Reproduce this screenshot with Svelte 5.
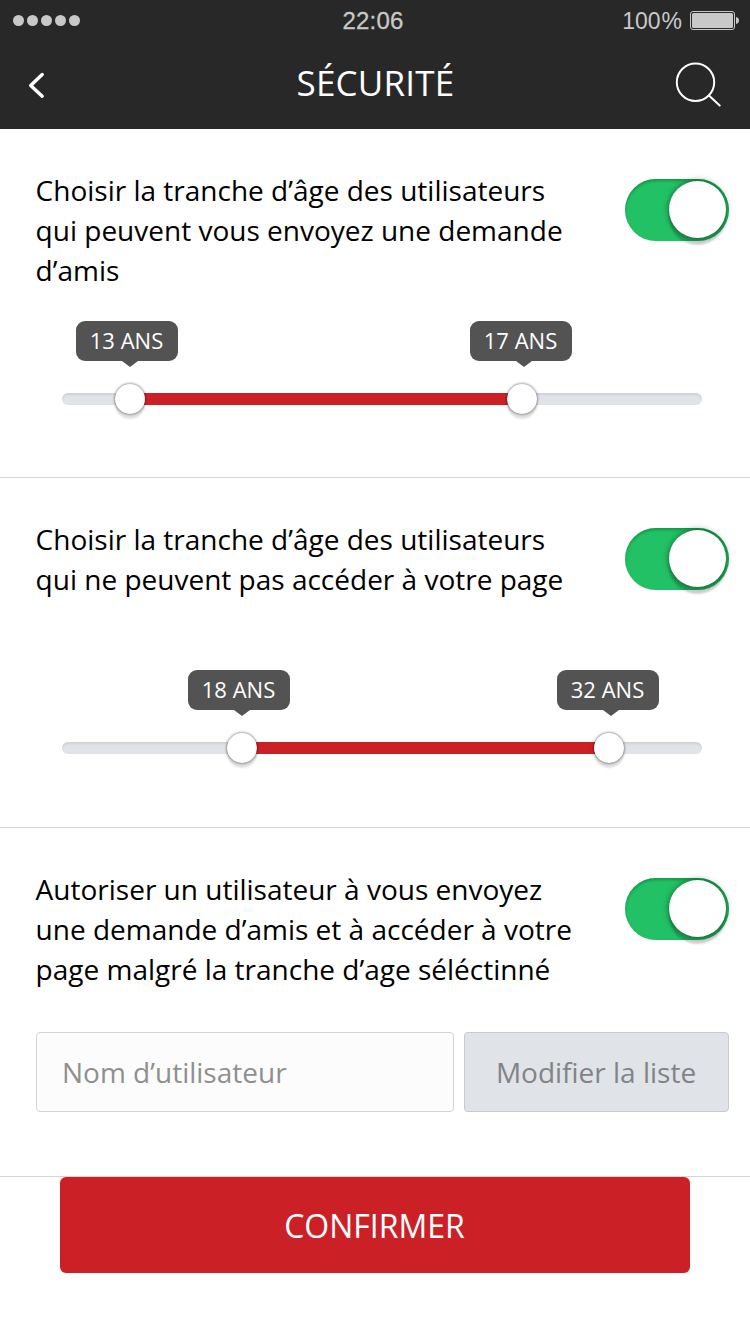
<script>
  const ranges = [
    {
      text: ['Choisir la tranche d’âge des utilisateurs', 'qui peuvent vous envoyez une demande', 'd’amis'],
      from: 68,
      to: 460,
      tips: [
        { left: 14, label: '13 ANS' },
        { left: 408, label: '17 ANS' }
      ]
    },
    {
      text: ['Choisir la tranche d’âge des utilisateurs', 'qui ne peuvent pas accéder à votre page'],
      from: 180,
      to: 547,
      tips: [
        { left: 126, label: '18 ANS' },
        { left: 495, label: '32 ANS' }
      ]
    }
  ];
  const permission = ['Autoriser un utilisateur à vous envoyez', 'une demande d’amis et à accéder à votre', 'page malgré la tranche d’age séléctinné'];
</script>

{#snippet heading(lines)}
  <div class="heading">
    <p>{#each lines as line}<span>{line}</span>{/each}</p>
    <div class="toggle"><i></i></div>
  </div>
{/snippet}

<div class="screen">
  <header>
    <div class="status">
      <div class="signal"><i></i><i></i><i></i><i></i><i></i></div>
      <div class="time">22:06</div>
      <div class="power">
        <span>100<b>%</b></span>
        <svg width="50" height="20" viewBox="0 0 50 20">
          <rect x=".5" y=".5" width="44" height="18" rx="2.5" fill="none" stroke="#c8c8c8" />
          <rect x="2" y="2" width="41" height="15" rx="1.5" fill="#c8c8c8" />
          <path d="M46 6c4 .5 4 6.500 0 7z" fill="#c8c8c8" />
        </svg>
      </div>
    </div>
    <nav>
      <svg class="back" width="20" height="30" viewBox="0 0 20 30" fill="none" stroke="#fff" stroke-width="3.4" stroke-linecap="round" stroke-linejoin="round">
        <path d="M14.200 4.500 2.700 15.500l11.500 10.700" />
      </svg>
      <h1>SÉCURITÉ</h1>
      <svg class="search" width="48" height="48" viewBox="0 0 48 48" fill="none" stroke="#fff" stroke-width="2" stroke-linecap="round">
        <circle cx="21.500" cy="21.300" r="18.700" />
        <path d="m35.200 34.700 10.500 9.800" />
      </svg>
    </nav>
  </header>

  {#each ranges as range}
    <section>
      {@render heading(range.text)}
      <div class="slider">
        {#each range.tips as tip}
          <div class="tip" style="left: {tip.left}px">{tip.label}</div>
        {/each}
        <div class="track">
          <div class="fill" style="left: {range.from}px; width: {range.to - range.from}px"></div>
          <div class="thumb" style="left: {range.from}px"></div>
          <div class="thumb" style="left: {range.to}px"></div>
        </div>
      </div>
    </section>
  {/each}

  <section>
    {@render heading(permission)}
    <div class="fields">
      <div class="input"><span>Nom d’utilisateur</span></div>
      <button class="edit"><span>Modifier la liste</span></button>
    </div>
  </section>

  <button class="confirm"><span>CONFIRMER</span></button>
</div>

<style>
  :global(body) { margin: 0; background: #fff; }
  .screen {
    width: 750px;
    height: 1331px;
    overflow: hidden;
    background: #fff;
    font-family: "Open Sans", sans-serif;
    font-weight: 400;
    color: #000;
  }
  header { height: 129px; background: #282828; color: #fff; }
  .status {
    display: grid;
    grid-template-columns: 1fr auto 1fr;
    align-items: center;
    height: 41px;
    padding: 0 10px 0 13px;
    color: #c8c8c8;
    font-family: "Liberation Sans", Arial, sans-serif;
    font-size: 24px;
    line-height: 41px;
  }
  .signal { display: flex; gap: 3px; }
  .signal i { width: 11px; height: 11px; border-radius: 50%; background: #c8c8c8; }
  .time { margin-right: 7px; letter-spacing: .2px; -webkit-text-stroke: .3px #c8c8c8; }
  .power { display: flex; justify-content: flex-end; align-items: center; gap: 8px; font-size: 23px; }
  .power span { padding-top: 2px; line-height: 37px; }
  .power b { font-weight: 400; margin-left: 1px; }
  nav { display: grid; grid-template-columns: 48px 1fr 48px; align-items: center; height: 88px; padding: 0 27px 0 26px; }
  .back { display: block; margin-left: 2px; }
  h1 { margin: 0 0 5px 2px; text-align: center; font-size: 35px; line-height: 46px; font-weight: 400; letter-spacing: .2px; }
  .search { display: block; margin: -1px 0 0 -1px; }
  section { box-sizing: border-box; height: 349px; padding: 42px 21px 0 36px; border-bottom: 1px solid #d4d5d7; }
  section:nth-of-type(2) { height: 350px; }
  .heading { display: flex; justify-content: space-between; height: 120px; }
  p { margin: -1px 0 0 -.4px; font-size: 28px; line-height: 40px; }
  p span { display: block; white-space: nowrap; }
  .toggle {
    display: flex;
    justify-content: flex-end;
    box-sizing: border-box;
    width: 104px;
    height: 62px;
    margin-top: 8px;
    padding: 2px 3px;
    border-radius: 31px;
    background: #23c165;
    box-shadow: inset 0 2px 3px rgba(0, 110, 40, .5);
  }
  .toggle i {
    width: 57px;
    height: 57px;
    border-radius: 50%;
    background: #fff;
    box-shadow: 0 0 6px rgba(0, 0, 0, .5), 0 7px 2px rgba(0, 0, 0, .17);
  }
  .slider { position: relative; width: 640px; margin: 30px 0 0 26px; padding-top: 72px; }
  .tip {
    position: absolute;
    top: 0;
    width: 101px;
    height: 40px;
    padding-right: 1px;
    border-radius: 9px;
    background: #535353;
    color: #fff;
    font-size: 22px;
    line-height: 38px;
    text-align: center;
  }
  .tip::after {
    content: "";
    position: absolute;
    left: 46px;
    top: 40px;
    border: 8px solid transparent;
    border-top: 6px solid #535353;
    border-bottom: 0;
  }
  .track { position: relative; height: 12px; border-radius: 6px; background: #e0e3e8; box-shadow: inset 0 2px 2px rgba(0, 0, 0, .08); }
  .fill { position: absolute; top: 0; height: 12px; background: #cc2027; }
  .thumb {
    position: absolute;
    top: -9px;
    width: 30px;
    height: 30px;
    margin-left: -15px;
    border-radius: 50%;
    background: #fff;
    box-shadow: 0 0 3px rgba(0, 0, 0, .7), 0 5px 2px rgba(0, 0, 0, .12);
  }
  .fields { display: flex; gap: 10px; margin-top: 42px; }
  .input, button { box-sizing: border-box; font-family: inherit; font-weight: inherit; font-size: 28px; line-height: 40px; }
  .input { width: 418px; height: 80px; padding: 19px 25px; border: 1px solid #d3d4d6; border-radius: 4px; background: #fcfcfc; color: #8f8f8f; }
  .edit { width: 265px; height: 80px; padding: 0 1px 0 0; border: 1px solid #c8cacf; border-radius: 4px; background: #e0e3e8; color: #828386; }
  .confirm { display: block; width: 630px; height: 96px; margin: 0 auto; padding: 1px 1px 0 0; border: 0; border-radius: 6px; background: #cc2027; color: #fff; font-size: 32px; }
</style>
